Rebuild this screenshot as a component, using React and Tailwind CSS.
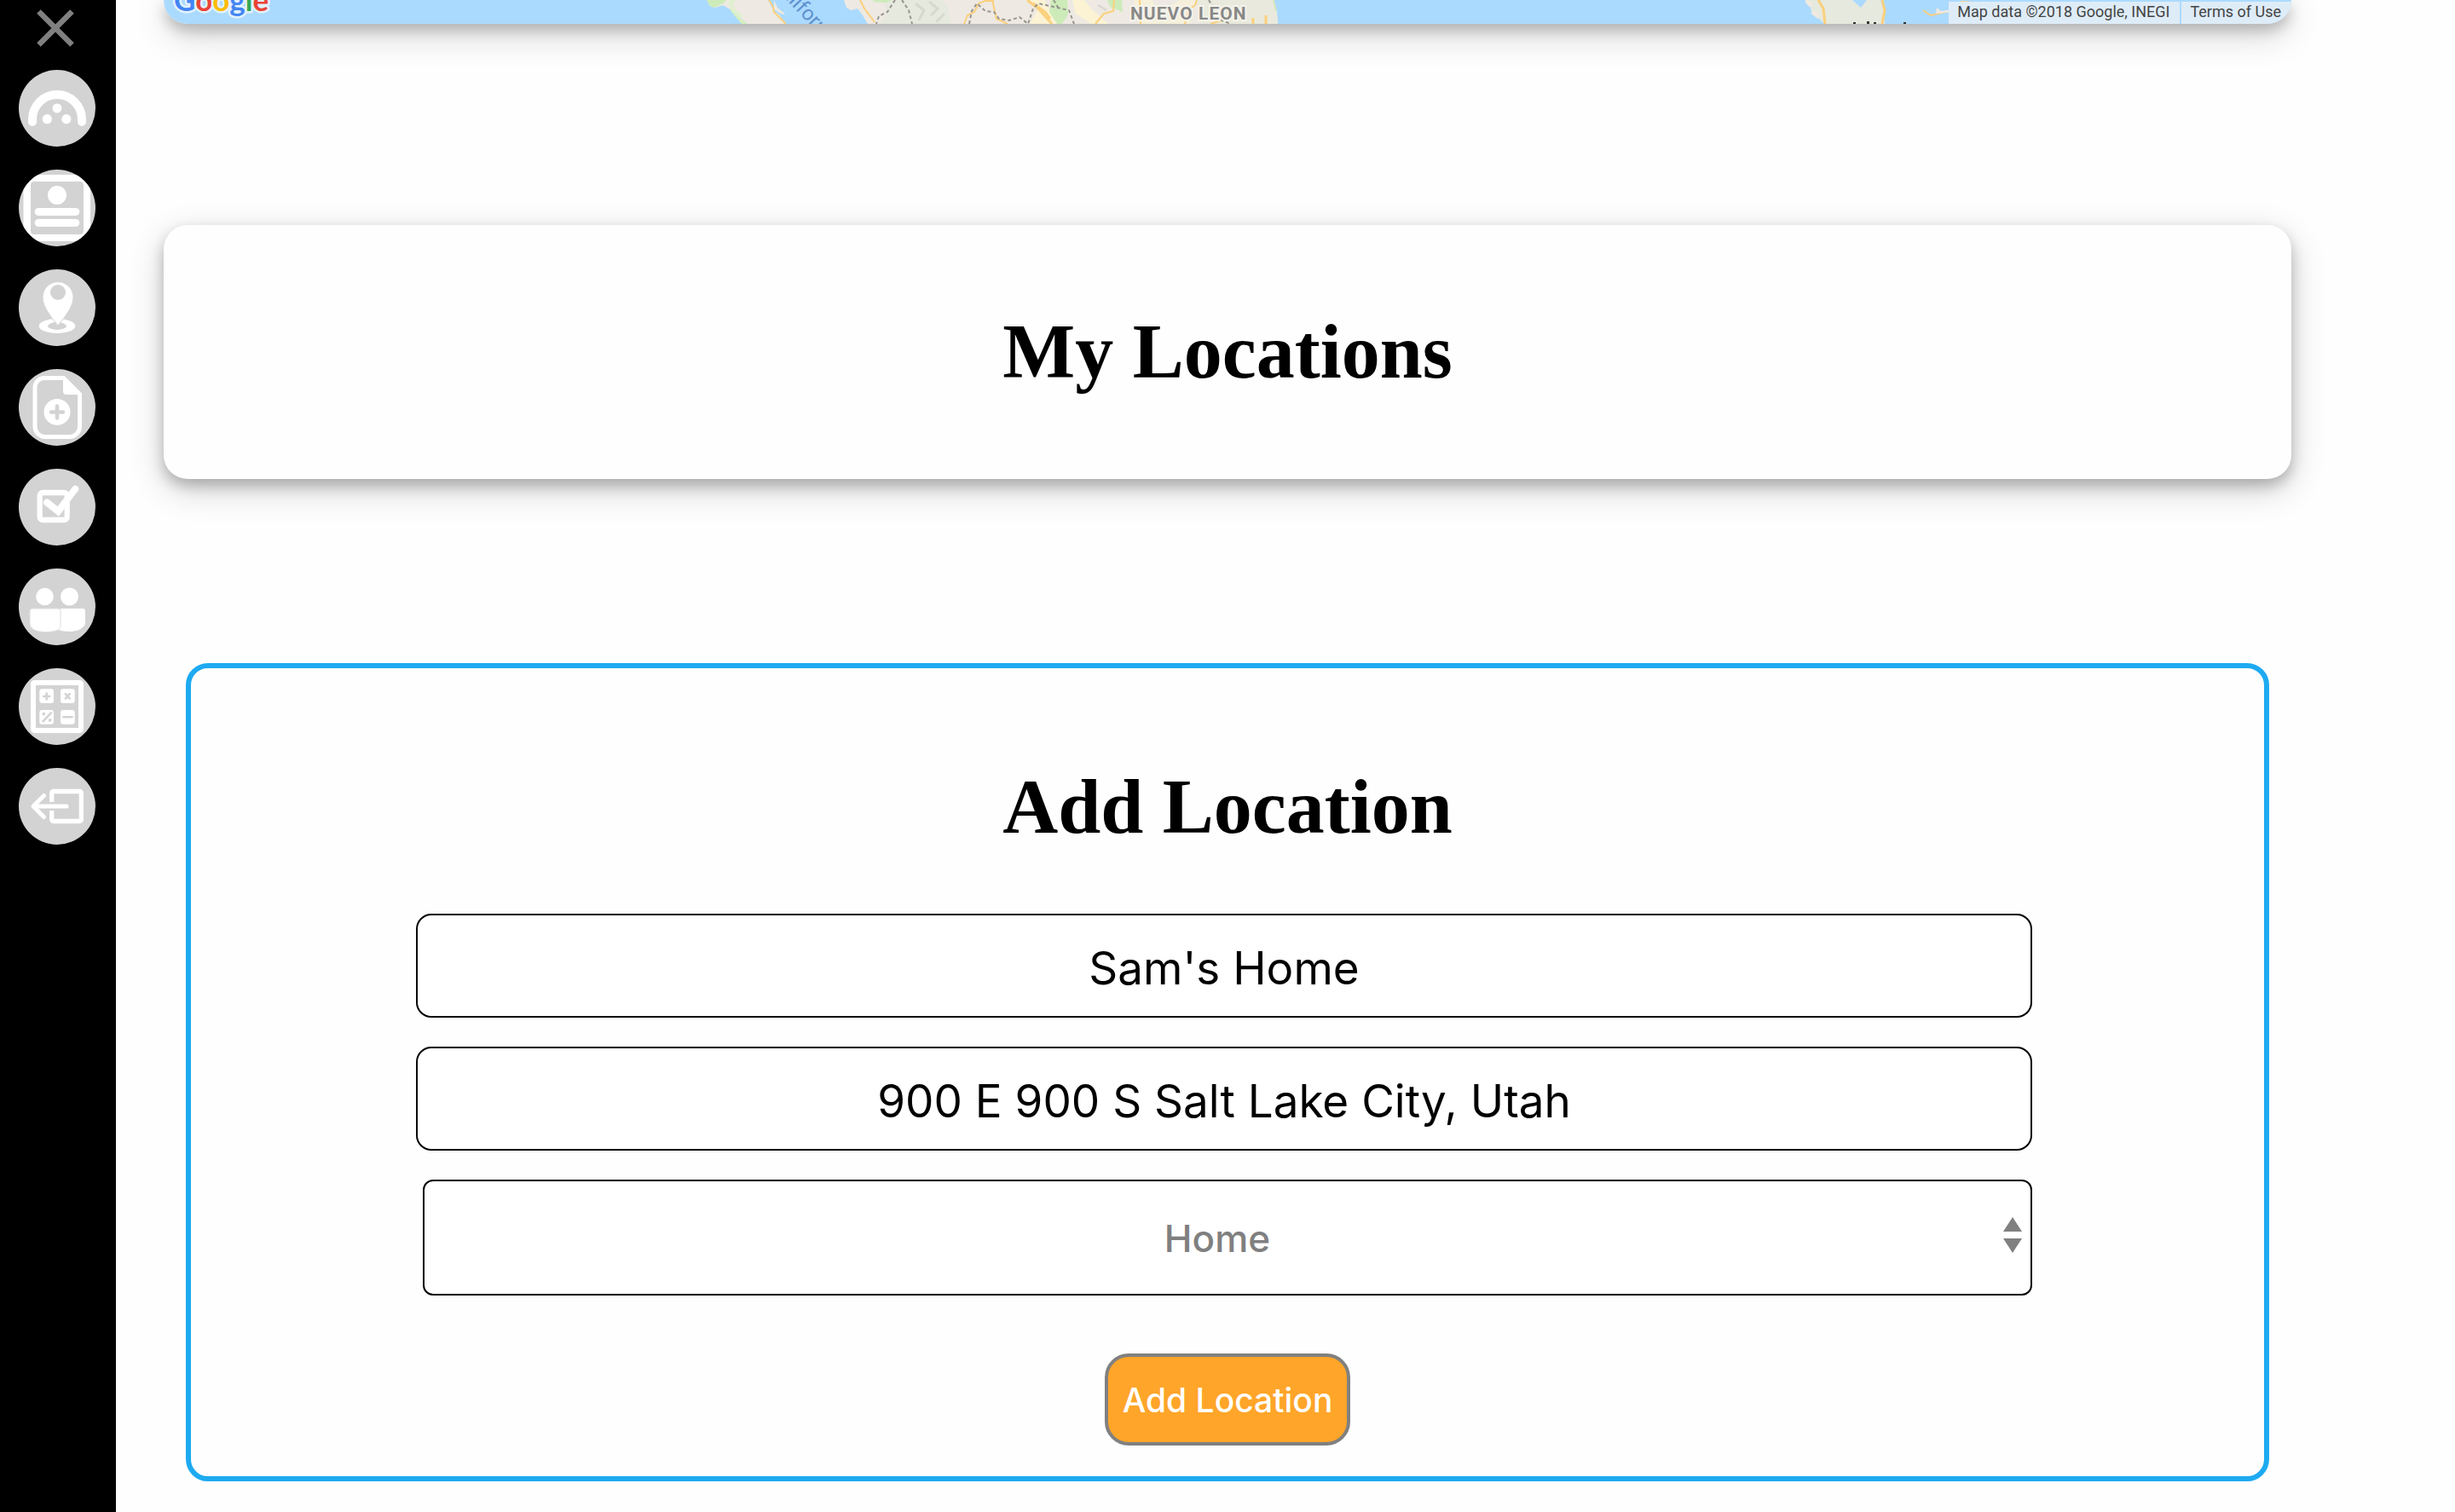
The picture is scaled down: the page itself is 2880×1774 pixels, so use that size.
import React from "react";

const NAV = [
  {
    label: "Dashboard",
    icon: (
      <>
        <path d="M16 61v-3a29 29 0 0 1 58 0v3" fill="none" stroke="#fff" strokeWidth="10" strokeLinecap="round" />
        <circle cx="45" cy="45" r="5.5" />
        <circle cx="33.3" cy="57.7" r="5.6" />
        <circle cx="55.8" cy="57.7" r="5.6" />
      </>
    ),
  },
  {
    label: "Profile",
    icon: (
      <>
        <rect x="5.5" y="6" width="78.5" height="78" />
        <rect x="14" y="14" width="62" height="62" rx="4" fill="#d3d3d3" />
        <circle cx="45" cy="30" r="11" />
        <rect x="18.7" y="45" width="52.6" height="9" rx="4.5" />
        <rect x="18.7" y="58" width="52.6" height="9" rx="4.5" />
      </>
    ),
  },
  {
    label: "Locations",
    icon: (
      <>
        <ellipse cx="45" cy="66.5" rx="21.3" ry="8.5" />
        <ellipse cx="45" cy="66.5" rx="11" ry="4.4" fill="#d3d3d3" />
        <path
          d="M46 66C40 58 28 45 28 32.7a18 18 0 0 1 36 0C64 45 52 58 46 66Z"
          stroke="#d3d3d3"
          strokeWidth="1"
        />
        <circle cx="46" cy="27" r="9" fill="#d3d3d3" />
      </>
    ),
  },
  {
    label: "New document",
    icon: (
      <>
        <path
          d="M30 10.5h22.5L71.5 29.5V67.5a12 12 0 0 1-12 12H31a12 12 0 0 1-12-12V21.5a11 11 0 0 1 11-11Z"
          fill="none"
          stroke="#fff"
          strokeWidth="5"
        />
        <path d="M52 9v17a4 4 0 0 0 4 4h17Z" />
        <circle cx="45" cy="50.4" r="15.5" />
        <path d="M45 43.5v14M38 50.4h14" stroke="#d3d3d3" strokeWidth="4.5" strokeLinecap="round" />
      </>
    ),
  },
  {
    label: "Tasks",
    icon: (
      <>
        <rect x="24.7" y="28" width="32" height="32" rx="3.5" fill="none" stroke="#fff" strokeWidth="6.3" />
        <path
          d="M33 39.5 46.3 50 66.3 23.7"
          fill="none"
          stroke="#fff"
          strokeWidth="8"
          strokeLinecap="round"
        />
      </>
    ),
  },
  {
    label: "People",
    icon: (
      <>
        <circle cx="30.5" cy="33" r="10.3" />
        <circle cx="59.5" cy="33" r="10.5" />
        <path d="M49 47H75a3 3 0 0 1 3 3V65c-3 7-12 9-19 9-5 0-9-1-13-2Z" />
        <path
          d="M16 47H46a3 3 0 0 1 3 3V68c0 5-10 6.5-18 6.5-9 0-18-3-18-9.5V50a3 3 0 0 1 3-3Z"
          stroke="#dedede"
          strokeWidth="1"
        />
      </>
    ),
  },
  {
    label: "Calculator",
    icon: (
      <>
        <rect x="17" y="17" width="56" height="56" rx="1.5" fill="none" stroke="#fff" strokeWidth="6" />
        <rect x="24.3" y="24.3" width="16.7" height="16.7" rx="3" />
        <rect x="49" y="24.3" width="16.7" height="16.7" rx="3" />
        <rect x="24.3" y="49" width="16.7" height="16.7" rx="3" />
        <rect x="49" y="49" width="16.7" height="16.7" rx="3" />
        <g stroke="#d3d3d3" strokeWidth="2.6" strokeLinecap="round" fill="none">
          <path d="M32.7 29.5v7M29.2 33h7" />
          <path d="m54.8 30.2 5 5.4M59.8 30.2l-5 5.4" />
          <path d="M52.5 57.3h10" />
          <path d="m28.5 62.3 9.5-10" />
        </g>
        <circle cx="29.3" cy="53.6" r="1.9" fill="#d3d3d3" />
        <circle cx="36.6" cy="61" r="1.9" fill="#d3d3d3" />
      </>
    ),
  },
  {
    label: "Log out",
    icon: (
      <g fill="none" stroke="#fff" strokeWidth="5.3">
        <path d="M38.7 40V29.5a2 2 0 0 1 2-2H71.4a2 2 0 0 1 2 2V60.5a2 2 0 0 1-2 2H40.7a2 2 0 0 1-2-2V50" />
        <path d="M56 45H18M29.500 32.5 17 45l12.5 12.5" strokeLinecap="round" strokeLinejoin="round" strokeWidth="5" />
      </g>
    ),
  },
];

function Sidebar() {
  return (
    <nav aria-label="Main" className="flex w-34 shrink-0 flex-col items-center gap-[27px] bg-black pt-[11px] pr-0.5">
      <button type="button" aria-label="Close menu" className="mr-1 block">
        <svg viewBox="0 0 44 44" className="block size-11">
          <path d="M2.5 2.5 41.5 41.5M41.5 2.5 2.5 41.5" stroke="#808080" strokeWidth="6.5" />
        </svg>
      </button>
      {NAV.map((item) => (
        <a key={item.label} href="#" aria-label={item.label} className="block rounded-full bg-[#d3d3d3]">
          <svg viewBox="0 0 90 90" fill="#fff" className="block size-[90px] rounded-full">
            {item.icon}
          </svg>
        </a>
      ))}
    </nav>
  );
}

function MapStrip() {
  return (
    <section
      aria-label="Map"
      className="relative overflow-hidden rounded-b-[28px] bg-[#abdaff]"
    >
      <svg viewBox="192 0 2496 28" preserveAspectRatio="xMidYMin slice" className="block h-7 w-full">
        <path d="M829 0 833 7 838 9 842 8 848 6 855 10 877 28H922L914 17 907 12 901 0Z" fill="#eee9e2" />
        <path d="M829 0 833 7 838 9 844 6 849 4 852 0Z" fill="#cdebb9" />
        <path d="M854 0 856 8 862 16 877 28H870L858 14Z" fill="#d6efc0" />
        <path d="M862 0 857 3 860 11 870 20" fill="none" stroke="#dff0cf" strokeWidth="4" />
        <path d="M908 0 912 9 921 16 918 17 908 11Z" fill="#eee9e2" />
        <path d="M902 0 907 8 908 14 922 28" fill="none" stroke="#fbd07c" strokeWidth="2" />
        <path d="M990 0 993 9 998 12 1006 10 1012 18 1018 28H1499L1498 15 1494 0Z" fill="#eee9e2" />
        <path d="M1036 0 1042 15 1032 28H1116L1112 10 1106 0Z" fill="#e6e9dd" />
        <path d="M1023 2 1026 0H1046L1040 3Z" fill="#cdebb9" />
        <path d="M1205 0 1218 10 1208 28H1240L1225 0Z" fill="#fbf3d3" />
        <path d="M1233 0 1231 14 1240 28H1246L1253 17 1252 0Z" fill="#cdebb9" />
        <path d="M1258 0 1262 16 1280 28H1300L1280 10 1272 0Z" fill="#fbf3d3" />
        <path d="M1299 0 1302 8 1317 14 1316 0Z" fill="#cdebb9" />
        <path d="M1330 0 1336 28H1362L1352 0Z" fill="#f6f1da" />
        <path d="M1410 28 1402 0H1494L1498 14 1499 28Z" fill="#e9eadd" />
        <path d="M1362 28 1370 8 1384 0H1402L1396 28Z" fill="#f6efdb" />
        <g fill="none" stroke="#fbd07c" strokeWidth="2">
          <path d="M1009 0 1014 10 1026 26" />
          <path d="M1131 28 1135 18 1143 14 1148 4 1156 1H1166L1164 0M1164 0 1169 22 1182 28" />
          <path d="M1285 28 1295 16 1306 13 1307 0" />
          <path d="M1337 0 1338 28M1390 28 1394 12 1402 6 1404 0M1420 28 1440 22" />
          <path d="M1470 21V28M1485 18V28" strokeWidth="3" />
          <path d="M1205 0 1218 10 1234 28" strokeWidth="3" />
          <path d="M1212 4 1226 14 1232 22" strokeWidth="3" />
          <path d="M1494 0 1497 13" stroke="#d6e6c0" />
        </g>
        <g fill="none" stroke="#96968f" strokeWidth="2" strokeDasharray="4 3">
          <path d="M1050 0 1041 14 1031 19 1028 28" />
          <path d="M1058 0 1066 12 1070 28" />
          <path d="M1137 28 1140 13 1146 4 1156 13 1166 14 1172 22 1184 24 1196 20 1206 28 1212 10 1218 4 1254 12 1260 28" />
          <path d="M1236 0 1242 10" />
          <path d="M1418 0 1424 10 1428 22 1444 28" />
        </g>
        <g fill="none" stroke="#d5dbcc" strokeWidth="3">
          <path d="M1074 4 1084 12 1078 24M1090 2 1100 10 1092 18M1098 26 1108 16" />
          <path d="M1345 16 1356 22M1288 6 1298 12" stroke="#ddd9d4" />
        </g>
        <path d="M2119 0 2124 6 2125 14 2134 22 2140 28H2211L2210 12 2206 0H2190L2183 9 2173 0Z" fill="#e6e9dd" />
        <path d="M2119 0 2125 7M2126 14 2134 20" stroke="#efe9e1" strokeWidth="5" />
        <path d="M2133 0 2139 10 2141 28M2208 0 2211 12 2208 28" fill="none" stroke="#fbd07c" strokeWidth="3" />
        <path d="M2256 12 2265 18 2291 12M2300 2 2316 3" fill="none" stroke="#fbd07c" strokeWidth="2" />
        <path d="M2272 9 2277 13 2290 11 2291 14 2271 16Z" fill="#eee9e2" />
        <path d="M2174 26H2177V28H2174ZM2190 25H2193V28H2190ZM2198 26H2201V28H2198ZM2233 26H2236V28H2233Z" fill="#333" />
        <g fontFamily="Roboto, sans-serif">
          <text
            x="1326"
            y="23"
            fontSize="21"
            fontWeight="700"
            fill="#888"
            stroke="#f5f3ea"
            strokeWidth="4"
            paintOrder="stroke"
            className="tracking-wider"
          >
            NUEVO LEON
          </text>
          <text x="0" y="0" transform="translate(905 -19) rotate(47)" fontSize="24" fill="#5f91cf">
            California
          </text>
        </g>
        <text
          x="204"
          y="13"
          fontFamily="Lato, sans-serif"
          fontSize="35"
          fontWeight="700"
          stroke="#e3f2fd"
          strokeWidth="5"
          strokeLinejoin="round"
          paintOrder="stroke"
        >
          <tspan fill="#4285f4">G</tspan>
          <tspan fill="#ea4335">o</tspan>
          <tspan fill="#fbbc05">o</tspan>
          <tspan fill="#4285f4">g</tspan>
          <tspan fill="#34a853">l</tspan>
          <tspan fill="#ea4335">e</tspan>
        </text>
      </svg>
      <div className="absolute right-0 bottom-0 flex h-[26px] gap-0.5 font-[Roboto,sans-serif] text-lg leading-6 text-[#444]">
        <span className="bg-[#deecf7] pr-3 pl-2.5">Map data ©2018 Google, INEGI</span>
        <a href="#" className="bg-[#deecf7] pr-3 pl-2.5">
          Terms of Use
        </a>
      </div>
    </section>
  );
}

const field =
  "block h-[122px] w-full rounded-[18px] border-2 border-black bg-white pt-1.5 text-center text-[53px] text-black";
const heading = "text-center font-['Liberation_Serif',serif] text-[90px] leading-[106px] font-bold text-black";

function LocationForm() {
  return (
    <form
      className="mx-[26px] flex flex-col rounded-[26px] border-6 border-[#1eaaf1] pt-[110px] pr-68 pb-9 pl-66"
      onSubmit={(e) => e.preventDefault()}
    >
      <div className="pl-2">
        <h2 className={heading}>Add Location</h2>
      </div>
      <div className="mt-[72px] flex flex-col gap-[34px]">
        <input aria-label="Location name" type="text" defaultValue="Sam's Home" className={field} />
        <input
          aria-label="Address"
          type="text"
          defaultValue="900 E 900 S Salt Lake City, Utah"
          className={field}
        />
        <div className="relative ml-2">
          <select
            aria-label="Location type"
            defaultValue="Home"
            className="block h-[136px] w-full appearance-none rounded-xl border-2 border-black bg-white pt-0.5 pr-6 text-center text-[44px] font-medium text-[#808080] [text-align-last:center]"
          >
            <option>Home</option>
            <option>Work</option>
          </select>
          <svg
            viewBox="0 0 22 44"
            fill="#808080"
            className="pointer-events-none absolute top-11 right-3 h-11 w-[22px]"
          >
            <path d="M11 0 22 17H0ZM11 42 22 25H0Z" />
          </svg>
        </div>
      </div>
      <button
        type="submit"
        className="mt-[68px] ml-2 h-[108px] w-72 self-center rounded-[28px] border-4 border-[#808080] bg-[#ffa529] pt-0.5 text-[39px] font-medium whitespace-nowrap text-white"
      >
        Add Location
      </button>
    </form>
  );
}

export default function App() {
  return (
    <div className="flex min-h-screen bg-[#fefefe] font-[Inter,sans-serif]">
      <Sidebar />
      <main className="min-w-0 flex-1 pr-48 pl-14">
        <div className="rounded-b-[28px] shadow-[0_8px_16px_rgba(0,0,0,0.22),0_12px_40px_rgba(0,0,0,0.19)]">
          <MapStrip />
        </div>
        <section className="mt-[236px] mb-[216px] rounded-[28px] bg-[#fefefe] py-24 shadow-[0_8px_16px_rgba(0,0,0,0.22),0_12px_40px_rgba(0,0,0,0.19)]">
          <h2 className={heading}>My Locations</h2>
        </section>
        <LocationForm />
      </main>
    </div>
  );
}
